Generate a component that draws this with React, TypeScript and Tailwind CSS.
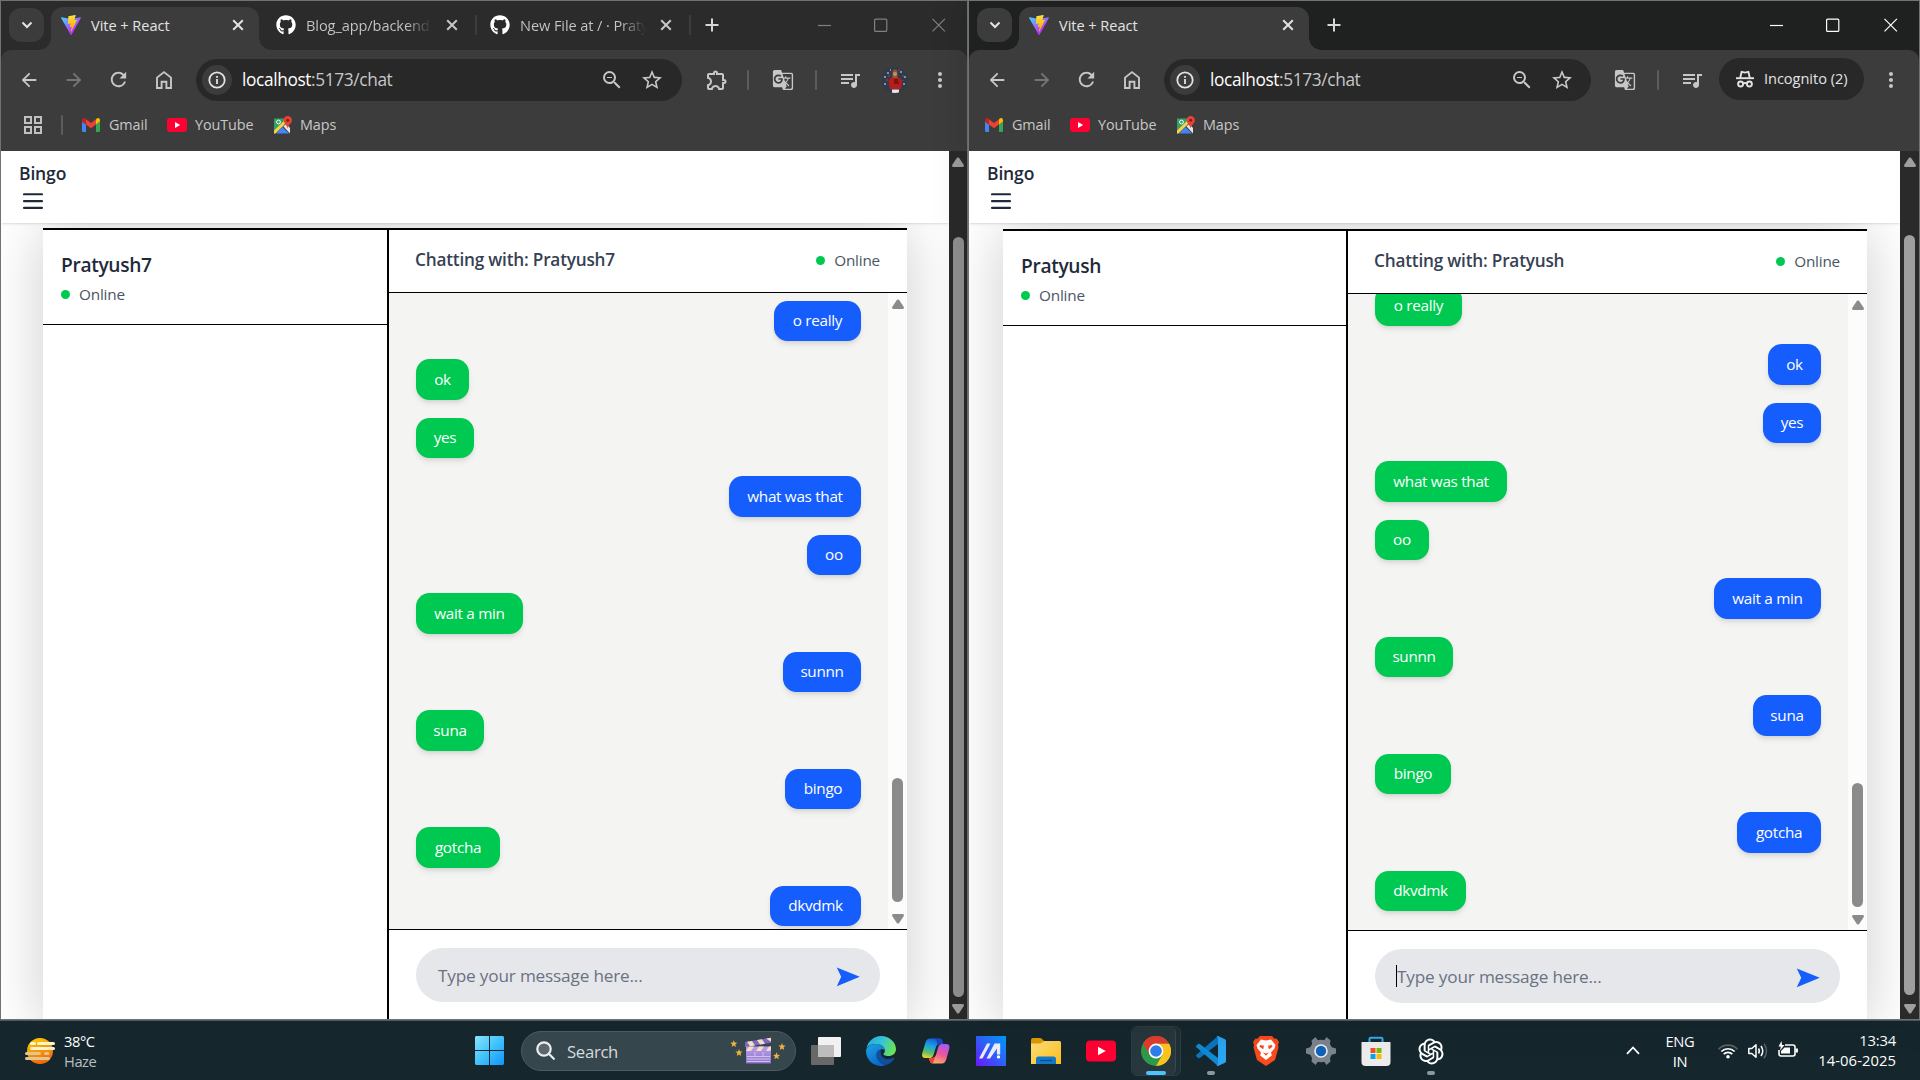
import React from 'react';
import { FaGithub } from 'react-icons/fa';
import {
  MdArrowBack,
  MdArrowForward,
  MdRefresh,
  MdZoomOut,
  MdStarOutline,
  MdOutlineExtension,
  MdGTranslate,
  MdQueueMusic,
  MdMoreVert,
} from 'react-icons/md';
import { AiOutlineOpenAI } from 'react-icons/ai';

type Side = 'in' | 'out';
interface Message {
  text: string;
  fromLeft: Side;
  width: string;
}

const messages: Message[] = [
  { text: 'o really', fromLeft: 'out', width: 'w-[87px]' },
  { text: 'ok', fromLeft: 'in', width: 'w-[53px]' },
  { text: 'yes', fromLeft: 'in', width: 'w-[58px]' },
  { text: 'what was that', fromLeft: 'out', width: 'w-[132px]' },
  { text: 'oo', fromLeft: 'out', width: 'w-[54px]' },
  { text: 'wait a min', fromLeft: 'in', width: 'w-[107px]' },
  { text: 'sunnn', fromLeft: 'out', width: 'w-[78px]' },
  { text: 'suna', fromLeft: 'in', width: 'w-[68px]' },
  { text: 'bingo', fromLeft: 'out', width: 'w-[76px]' },
  { text: 'gotcha', fromLeft: 'in', width: 'w-[84px]' },
  { text: 'dkvdmk', fromLeft: 'out', width: 'w-[91px]' },
];

/* ---------- browser icons ---------- */

function ViteLogo({ id }: { id: string }) {
  return (
    <svg viewBox="0 0 256 257" className="h-5 w-5 shrink-0">
      <defs>
        <linearGradient id={id + 'a'} x1="-.8%" x2="57.6%" y1="7.7%" y2="78.4%">
          <stop offset="0%" stopColor="#41D1FF" />
          <stop offset="100%" stopColor="#BD34FE" />
        </linearGradient>
        <linearGradient id={id + 'b'} x1="43.4%" x2="50.3%" y1="2.2%" y2="89%">
          <stop offset="0%" stopColor="#FFEA83" />
          <stop offset="8.3%" stopColor="#FFDD35" />
          <stop offset="100%" stopColor="#FFA800" />
        </linearGradient>
      </defs>
      <path
        fill={`url(#${id}a)`}
        d="M255.153 37.938L134.897 252.976c-2.483 4.44-8.862 4.466-11.382.048L.875 37.958c-2.746-4.814 1.371-10.646 6.827-9.67l120.385 21.517a6.537 6.537 0 0 0 2.322-.004l117.867-21.483c5.438-.991 9.574 4.796 6.877 9.62Z"
      />
      <path
        fill={`url(#${id}b)`}
        d="M185.432.063L96.44 17.501a3.268 3.268 0 0 0-2.634 3.014l-5.474 92.456a3.268 3.268 0 0 0 3.997 3.378l24.777-5.718c2.318-.535 4.413 1.507 3.936 3.838l-7.361 36.047c-.495 2.426 1.782 4.5 4.151 3.78l15.304-4.649c2.372-.72 4.652 1.36 4.15 3.788l-11.698 56.621c-.732 3.542 3.979 5.473 5.943 2.437l1.313-2.028l72.516-144.72c1.215-2.423-.88-5.186-3.54-4.672l-25.505 4.922c-2.396.462-4.435-1.77-3.759-4.114l16.646-57.705c.677-2.35-1.37-4.583-3.769-4.113Z"
      />
    </svg>
  );
}

const CloseX = () => (
  <svg viewBox="0 0 12 12" className="h-3 w-3 shrink-0" stroke="currentColor" strokeWidth="2" fill="none">
    <path d="M1.2 1.2l9.6 9.6M10.8 1.2l-9.6 9.6" />
  </svg>
);

const Plus = () => (
  <svg viewBox="0 0 14 14" className="h-[14px] w-[14px] shrink-0" stroke="#d6d6d6" strokeWidth="2" fill="none">
    <path d="M7 .5v13M.5 7h13" />
  </svg>
);

const HomeIcon = () => (
  <svg viewBox="0 0 18 20" className="h-5 w-[18px]" fill="none" stroke="#c7c7c7" strokeWidth="1.9">
    <path d="M2 18V7.6L9 2.1l7 5.5V18h-4.6v-6.3H6.6V18z" />
  </svg>
);

const InfoIcon = () => (
  <svg viewBox="0 0 18 18" className="h-[18px] w-[18px]" fill="none" stroke="#e3e3e3" strokeWidth="1.8">
    <circle cx="9" cy="9" r="7.7" />
    <path d="M9 8v5M9 5v1.8" />
  </svg>
);

const AppsIcon = () => (
  <svg viewBox="0 0 18 18" className="h-[18px] w-[18px]" fill="none" stroke="#c0c0c0" strokeWidth="2">
    <path d="M1 1h6v6H1zM11 1h6v6h-6zM1 11h6v6H1zM11 11h6v6h-6z" />
  </svg>
);

const IncognitoIcon = () => (
  <svg viewBox="0 0 18 18" className="h-[18px] w-[18px]" fill="none" stroke="#e3e3e3" strokeWidth="1.9">
    <path d="M0 8.2h18" />
    <path d="M4.2 8 5.6 1.8 9 2.6l3.4-.8L13.800 8" />
    <circle cx="4.600" cy="14" r="2.500" />
    <circle cx="13.400" cy="14" r="2.500" />
    <path d="M7 13.500q2-1.100 4 0" />
  </svg>
);

const GmailIcon = () => (
  <svg viewBox="0 0 18 14" className="h-[14px] w-[18px] shrink-0">
    <path fill="#4285f4" d="M0 3.500v9.200Q0 14 1.300 14H4V6.500z" />
    <path fill="#34a853" d="M18 3.500v9.200q0 1.300-1.300 1.300H14V6.500z" />
    <path fill="#ea4335" d="M4 1.300 9 5l5-3.700v5.200L9 10.200 4 6.500z" />
    <path fill="#c5221f" d="M0 2.200Q0 0 2 0q1 0 2 1.300v5.200L0 3.600z" />
    <path fill="#fbbc04" d="M18 2.200Q18 0 16 0q-1 0-2 1.300v5.200l4-2.900z" />
  </svg>
);

const YouTubeSmall = () => (
  <svg viewBox="0 0 20 14" className="h-[14px] w-5 shrink-0">
    <rect width="20" height="14" rx="3" fill="#ff0033" />
    <path d="M8 4l5.200 3L8 10z" fill="#fff" />
  </svg>
);

const MapsIcon = () => (
  <svg viewBox="0 0 18 18" className="h-[18px] w-[18px] shrink-0">
    <path fill="#34a265" d="M0 2.500h12L9 10 1 17.500H0z" />
    <path fill="#fbd04b" d="M0 14.500 10 5l2 2L1.500 17.500H0z" />
    <path fill="#4285f4" d="M2 17.500 8.500 11l6.500 6.500z" />
    <path fill="#e6e6e6" d="M9.300 10.300 12.500 8 16 12v5.500z" />
    <circle cx="4.500" cy="6" r="1.900" fill="none" stroke="#fff" strokeWidth="1" />
    <path fill="#e54335" d="M13.700 0a4.200 4.200 0 0 0-4.200 4.200c0 3 3.500 4.300 4.200 8.300.7-4 4.200-5.300 4.200-8.300A4.200 4.200 0 0 0 13.700 0z" />
    <circle cx="13.700" cy="4.200" r="1.500" fill="#8a1c14" />
  </svg>
);

const Avatar = () => (
  <svg viewBox="0 0 26 26" className="ml-[20px] h-[26px] w-[26px] shrink-0 rounded-full">
    <rect width="26" height="26" fill="#2f3a4b" />
    <path d="M2 9h2v2H2zM5 5h2v2H5zM18 4h2v2h-2zM22 9h2v2h-2zM2 16h2v2H2zM21 16h2v2h-2zM8 2h1v2H8z" fill="#7f93a8" />
    <path d="M4 12h2v2H4zM20 8h2v2h-2zM6 8h2v2H6zM16 2h2v2h-2zM20 13h2v1h-2z" fill="#7e3440" />
    <path d="M6.500 14q1.500-4 6.500-4t7 4l-1 8H8z" fill="#b81d1c" />
    <path d="M12 12h4l1 5h-5z" fill="#7e1313" />
    <path d="M10 22.500h7V26h-7z" fill="#e9e4e4" />
    <path d="M10.500 6q0-3.500 2.500-3.500t2.500 3.500v5h-5z" fill="#8a5a35" />
    <circle cx="13" cy="7" r="2" fill="#c48d62" />
  </svg>
);

/* ---------- browser chrome ---------- */

function WindowControls({ color, className }: { color: string; className: string }) {
  return (
    <svg viewBox="0 0 128 14" className={className} fill="none" stroke={color} strokeWidth="1.200">
      <path d="M0 7.500h13" />
      <rect x="56.600" y="1.200" width="12.200" height="12.200" rx="1" />
      <path d="M114.500.9l12.400 12.400M126.900.9l-12.400 12.400" />
    </svg>
  );
}

function TabSearch() {
  return (
    <div className="ml-[8px] mt-[7px] flex h-[34px] w-[35px] shrink-0 items-center justify-center rounded-[12px] bg-[#3c3c3c]">
      <svg viewBox="0 0 12 8" className="h-2 w-3" fill="none" stroke="#e3e3e3" strokeWidth="2">
        <path d="M1.500 1.500 6 6l4.500-4.500" />
      </svg>
    </div>
  );
}

function ActiveTab({ id, width }: { id: string; width: string }) {
  return (
    <>
      <div className="-ml-[5px] h-3 w-3 shrink-0 self-end bg-[radial-gradient(circle_at_0_0,transparent_11.5px,#3c3c3c_12px)]" />
      <div className={'mt-[6px] flex h-[43px] shrink-0 items-center rounded-t-[12px] bg-[#3c3c3c] pb-[7px] pl-[10px] pr-[15px] ' + width}>
        <ViteLogo id={id} />
        <span className="mt-[2px] ml-[10px] flex-1 text-[14.600px] tracking-[-0.050px] text-[#e3e3e3]">Vite + React</span>
        <span className="text-[#e3e3e3]">
          <CloseX />
        </span>
      </div>
      <div className="h-3 w-3 shrink-0 self-end bg-[radial-gradient(circle_at_100%_0,transparent_11.5px,#3c3c3c_12px)]" />
    </>
  );
}

function IdleTab({ title, className }: { title: string; className: string }) {
  return (
    <div className={'flex h-5 shrink-0 items-center ' + className}>
      <FaGithub className="h-5 w-5 shrink-0 text-white" />
      <span className="mt-[2px] ml-[10px] w-[126px] whitespace-nowrap bg-linear-to-r from-[#c7c7c7] from-80% to-[#2b2b2b] to-100% bg-clip-text text-[14.600px] tracking-[-0.100px] text-transparent">
        {title}
      </span>
      <span className="ml-[14px] text-[#c7c7c7]">
        <CloseX />
      </span>
      <span className="ml-[17px] h-5 w-[2px] bg-[#3c3c3c]" />
    </div>
  );
}

const Divider = ({ className }: { className: string }) => (
  <span className={'w-[2px] shrink-0 rounded bg-[#5c5c5c] ' + className} />
);

function NavButtons() {
  return (
    <div className="flex w-[180px] shrink-0 items-center text-[#c7c7c7]">
      <span className="flex w-[45px] justify-center">
        <MdArrowBack className="h-[22px] w-[22px]" />
      </span>
      <span className="flex w-[45px] justify-center text-[#757575]">
        <MdArrowForward className="h-[22px] w-[22px]" />
      </span>
      <span className="flex w-[45px] justify-center">
        <MdRefresh className="h-[23px] w-[23px]" />
      </span>
      <span className="flex w-[45px] justify-center">
        <HomeIcon />
      </span>
    </div>
  );
}

function AddressBar({ className }: { className: string }) {
  return (
    <div className={'ml-[10px] flex h-[42px] shrink-0 items-center rounded-full bg-[#282828] pl-[6px] ' + className}>
      <span className="flex h-[30px] w-[30px] items-center justify-center rounded-full bg-[#3c3c3c]">
        <InfoIcon />
      </span>
      <span className="ml-[10px] flex-1 text-[17.300px] tracking-[-0.370px] text-[#c7c7c7]">
        <span className="text-white">localhost</span>:5173/chat
      </span>
      <MdZoomOut className="h-6 w-6 text-[#c7c7c7]" />
      <MdStarOutline className="ml-[16px] h-6 w-6 text-[#c7c7c7]" />
    </div>
  );
}

function Bookmarks({ withApps }: { withApps: boolean }) {
  return (
    <div className={'flex h-[48px] items-center text-[14.400px] tracking-[-0.100px] text-[#c7c7c7] ' + (withApps ? 'pl-[23px]' : 'pl-[16px]')}>
      {withApps && (
        <div className="mr-[19px] flex items-center">
          <AppsIcon />
          <Divider className="ml-[19px] h-5" />
        </div>
      )}
      <GmailIcon />
      <span className="ml-[9px] w-[58px]">Gmail</span>
      <YouTubeSmall />
      <span className="ml-[8px] w-[79px]">YouTube</span>
      <MapsIcon />
      <span className="ml-[8px]">Maps</span>
    </div>
  );
}

/* ---------- page ---------- */

function Scrollbar({ className, thumb, arrow }: { className: string; thumb: string; arrow: string }) {
  return (
    <div className={'flex shrink-0 flex-col items-center ' + className}>
      <svg viewBox="0 0 12 10" className="h-[10px] w-3 shrink-0" fill={arrow}>
        <path d="M5 .8Q6 0 7 .8l4.800 7.200q.5 2-1.300 2h-9q-1.800 0-1.300-2z" />
      </svg>
      <div className={'w-[11px] shrink-0 rounded-full ' + thumb} />
      <svg viewBox="0 0 12 10" className="mt-auto h-[10px] w-3 shrink-0" fill={arrow}>
        <path d="M5 9.200q1 .8 2 0L11.800 2q.5-2-1.300-2h-9Q-.3 0 .2 2z" />
      </svg>
    </div>
  );
}

function Online({ className }: { className: string }) {
  return (
    <div className={'flex items-center text-[15.300px] tracking-[-0.200px] text-[#4a5565] ' + className}>
      <span className="mr-[9px] h-[9px] w-[9px] rounded-full bg-[#00c951]" />
      Online
    </div>
  );
}

interface ChatProps {
  peer: string;
  mirrored: boolean;
  focused: boolean;
  cardClass: string;
  sideClass: string;
  listClass: string;
  thumb: string;
}

function ChatCard({ peer, mirrored, focused, cardClass, sideClass, listClass, thumb }: ChatProps) {
  return (
    <div className={'flex w-[864px] shrink-0 border-t-2 border-black bg-white shadow-[0_0_56px_rgba(0,0,0,0.2)] ' + cardClass}>
      <div className={'shrink-0 border-r-2 border-black ' + sideClass}>
        <div className="h-[95px] border-b border-black pl-[18px] pt-[19px]">
          <div className="text-[19.200px] leading-[31px] font-semibold tracking-[-0.350px] text-[#1e2939]">{peer}</div>
          <Online className="mt-[3px] h-[23px]" />
        </div>
      </div>
      <div className="flex min-w-0 flex-1 flex-col">
        <div className="flex h-[63px] shrink-0 items-center justify-between border-b border-black pr-[27px] pb-[2px] pl-[26px]">
          <span className="text-[17.200px] font-semibold tracking-[-0.200px] text-[#364153]">Chatting with: {peer}</span>
          <Online className="" />
        </div>
        <div className="flex h-[636px] shrink-0 overflow-hidden bg-[#f4f4f2]">
          <div className={'flex min-w-0 flex-1 flex-col justify-end gap-[18px] px-[27px] ' + listClass}>
            {messages.map((m) => {
              const own = (m.fromLeft === 'out') !== mirrored;
              return (
                <div
                  key={m.text}
                  className={
                    'flex h-[40.500px] shrink-0 items-center justify-center rounded-[13.500px] text-[15.300px] font-medium tracking-[-0.320px] whitespace-nowrap text-white shadow-md ' +
                    m.width +
                    (own ? ' self-end bg-[#155dfc]' : ' self-start bg-[#00c951]')
                  }
                >
                  {m.text}
                </div>
              );
            })}
          </div>
          <Scrollbar className="w-[19px] bg-[#fcfcfc] pt-[6px] pb-[5px]" thumb={thumb} arrow="#8b8b8b" />
        </div>
        <div className="flex flex-1 items-start border-t border-black px-[27px] pt-[18px]">
          <div className="flex h-[54px] w-full items-center rounded-full bg-[#e5e7eb] pl-[21px] pr-[20px]">
            <span className={'h-[22px] w-px ' + (focused ? 'bg-black' : 'bg-transparent')} />
            <span className="mt-[2px] flex-1 text-[17.200px] tracking-[-0.180px] text-[#6a7282]">Type your message here...</span>
            <svg viewBox="0 0 24 20" className="mt-[3px] h-5 w-6" fill="#155dfc">
              <path d="M.8.400 23.800 9.700.8 19.200 5.200 9.700z" />
            </svg>
          </div>
        </div>
      </div>
    </div>
  );
}

function Page({ children, navWidth }: { children: React.ReactNode; navWidth: string }) {
  return (
    <div className={'flex h-full shrink-0 flex-col overflow-hidden bg-white ' + navWidth}>
      <header className="z-10 flex h-[72px] shrink-0 flex-col bg-white pt-[9px] pl-[18px] shadow-sm">
        <span className="text-[17.500px] leading-[27px] font-semibold tracking-[-0.150px] text-[#1e2939]">Bingo</span>
        <svg viewBox="0 0 20 17" className="mt-[6px] ml-[4px] h-[17px] w-5" stroke="#1e2939" strokeWidth="2.100" strokeLinecap="round">
          <path d="M1 1.300h18M1 8.100h18M1 14.900h18" />
        </svg>
      </header>
      {children}
    </div>
  );
}

/* ---------- taskbar ---------- */

const WeatherIcon = () => (
  <svg viewBox="0 0 30 26" className="ml-[25px] h-[26px] w-[30px] shrink-0">
    <defs>
      <linearGradient id="sun" x1="0" x2=".4" y1="0" y2="1">
        <stop offset="0" stopColor="#ffd400" />
        <stop offset="1" stopColor="#f26a0a" />
      </linearGradient>
    </defs>
    <circle cx="15" cy="13" r="13" fill="url(#sun)" />
    <g strokeWidth="3" strokeLinecap="round">
      <path d="M6.500 5.500h3M13.500 5.500h15M6.500 10.500h22" stroke="#fff3cc" />
      <path d="M1.500 15.500h13M20.500 15.500h2.500M1.500 20.500h22" stroke="#e3c68d" />
    </g>
  </svg>
);

const StartIcon = () => (
  <svg viewBox="0 0 29 29" className="ml-[378px] h-[29px] w-[29px] shrink-0">
    <defs>
      <linearGradient id="win" x1="0" x2="1" y1="0" y2="1">
        <stop offset="0" stopColor="#8be2fd" />
        <stop offset=".5" stopColor="#40c3fb" />
        <stop offset="1" stopColor="#0f95fb" />
      </linearGradient>
    </defs>
    <path fill="url(#win)" d="M1 0h13v14H0V1zM15 0h13l1 1v13H15zM0 15h14v14H1l-1-1zM15 15h14v13l-1 1H15z" />
  </svg>
);

const Clapper = () => (
  <svg viewBox="0 0 56 28" className="h-7 w-14 shrink-0">
    <defs>
      <linearGradient id="clap" x1="0" x2="0" y1="0" y2="1">
        <stop offset="0" stopColor="#b9a0e6" />
        <stop offset="1" stopColor="#8f72cf" />
      </linearGradient>
      <path id="star" d="M0-3.600 1-1.100 3.600-.9 1.600.8 2.200 3.400 0 2-2.200 3.400-1.600.8-3.600-.9-1-1.100z" />
    </defs>
    <g fill="#ecb43c">
      <use href="#star" x="4" y="7" transform="scale(.95)" />
      <use href="#star" x="9" y="15.500" />
      <use href="#star" x="52" y="9.500" />
      <use href="#star" x="47" y="19" transform="scale(.99)" />
    </g>
    <path d="M15 5 41 .8v5L15 10z" fill="#8167bd" />
    <path d="M17 4.700 22 3.900l3 4.500-5 .8zM27 3.100l5-.8 3 4.500-5 .8zM36 1.600l5-.8v4z" fill="#f4dccb" />
    <path d="M16 9.500h25V26q0 .500-.5.500h-24q-.5 0-.5-.500z" fill="url(#clap)" />
    <path d="M19 9.500h5l-3 4.500h-5zM29 9.500h5l-3 4.500h-5zM39 9.500h2V13l-1 1h-4z" fill="#f4dccb" />
    <path d="M17 19.500h23M17 22h23M17 24.500h23M25 15v4M33 15v4" stroke="#d9c8f5" strokeWidth=".9" />
  </svg>
);

const TaskView = () => (
  <svg viewBox="0 0 30 30" className="h-[30px] w-[30px]">
    <rect x="0" y="9" width="23" height="20" rx="1" fill="#686868" />
    <rect x="7" y="1" width="23" height="20" rx="1" fill="#f1f1f1" />
    <path d="M7 9h16v12H7z" fill="#bdbdbd" />
  </svg>
);

const EdgeIcon = () => (
  <svg viewBox="0 0 30 30" className="h-[30px] w-[30px]">
    <defs>
      <linearGradient id="edgeTop" x1="0" x2="1" y1=".3" y2=".6">
        <stop offset="0" stopColor="#27a7e6" />
        <stop offset=".5" stopColor="#35c7d0" />
        <stop offset="1" stopColor="#6fe34f" />
      </linearGradient>
      <linearGradient id="edgeBody" x1="0" x2=".6" y1="0" y2="1">
        <stop offset="0" stopColor="#1da4e4" />
        <stop offset="1" stopColor="#0a66c9" />
      </linearGradient>
    </defs>
    <path d="M.5 12C2 5 8 0 15 0c8 0 15 6 15 13 0 4.500-3.500 7-7.500 7-3.500 0-5.500-1.300-5-2.300 1-1 1.500-2 1.300-3.500C18.300 10 14 8 10 8 5 8 1.500 10.500.5 12z" fill="url(#edgeTop)" />
    <path d="M10 8c4.500 0 8 2.500 8.700 5.700-2.500-1.400-7.200-.2-7.700 4.800-.3 5 4 10 9 10.500-2 .8-3.500 1-5 1C7 30 0 23.500 0 15c0-4 5-7 10-7z" fill="url(#edgeBody)" />
    <path d="M13.500 13.800c-3.700 1.800-4.500 6.700-1.500 10.700 3 4 7 4.800 9.500 3.900 3.500-1.400 5.500-3.700 6.500-5.500.5-.8-.2-1.200-1-.8-6 2.600-11.500-.2-12-4.100-.3-2 .3-3.400-1.500-4.200z" fill="#114e9b" />
  </svg>
);

const CopilotIcon = () => (
  <svg viewBox="0 0 30 30" className="h-[30px] w-[30px]">
    <defs>
      <linearGradient id="coA" x1=".6" x2=".3" y1="0" y2="1">
        <stop offset="0" stopColor="#1656d8" />
        <stop offset=".4" stopColor="#19a3df" />
        <stop offset=".75" stopColor="#5bbf6a" />
        <stop offset="1" stopColor="#f0d02a" />
      </linearGradient>
      <linearGradient id="coB" x1=".7" x2=".3" y1="0" y2="1">
        <stop offset="0" stopColor="#a45af0" />
        <stop offset=".5" stopColor="#f0559a" />
        <stop offset="1" stopColor="#ffb05c" />
      </linearGradient>
    </defs>
    <path d="M9 2.500h9.500q2.200 0 3 2.500l.8 3h-4q-2.500 0-3.300 2.700l-2.500 8.300q-.8 3-3.500 3H4.500Q0 22 1.300 17L4.500 6.500Q5.700 2.500 9 2.500z" fill="url(#coA)" />
    <path d="M21 27.500h-9q-2.500 0-3.200-2.500L8 22h3.500q2.500 0 3.300-2.700L17.300 11q.8-3 3.500-3H25q4.500 0 3.200 5l-3 10.500q-1.200 4-4.200 4z" fill="url(#coB)" />
    <path d="M15 3h3.500q2.200 0 3 2.500l.8 2.500h-4l-1.800.5z" fill="#1746c4" />
    <path d="M8 22h3.500q1.500 0 2.500-1l-2 6.500q-2.500 0-3.200-2.500z" fill="#e8433c" />
  </svg>
);

const AsusIcon = () => (
  <svg viewBox="0 0 30 30" className="h-[30px] w-[30px]">
    <defs>
      <linearGradient id="asus" x1="0" x2="1" y1="1" y2="0">
        <stop offset="0" stopColor="#6b16ff" />
        <stop offset=".5" stopColor="#2f5ffa" />
        <stop offset="1" stopColor="#009dfc" />
      </linearGradient>
    </defs>
    <path fill="url(#asus)" d="M0 0h30v30H0z" />
    <path d="M3 22.500 11 7.500h3.500L6.500 22.500zM10.500 22.500l8-15h5.700v11h-3.300V12.500L14 22.500z" fill="#e9edff" />
    <circle cx="22.500" cy="20.900" r="1.700" fill="#fff" />
  </svg>
);

const FolderIcon = () => (
  <svg viewBox="0 0 30 30" className="h-[30px] w-[30px]">
    <defs>
      <linearGradient id="folder" x1="0" x2="1" y1="0" y2="1">
        <stop offset="0" stopColor="#ffe07a" />
        <stop offset="1" stopColor="#fbbd1c" />
      </linearGradient>
    </defs>
    <path d="M0 4q0-2 2-2h7q1 0 2 1l2 2h15v6H0z" fill="#dc9a05" />
    <path d="M0 7.500h9.500L13 5h15.500Q30 5 30 6.500V28H0z" fill="url(#folder)" />
    <path d="M5 28v-5q0-2.500 2.500-2.500h15Q25 20.500 25 23v5z" fill="#1279c8" />
    <path d="M9 24.500h12" stroke="#0b4f8a" strokeWidth="1.200" />
  </svg>
);

const YouTubeIcon = () => (
  <svg viewBox="0 0 30 30" className="h-[30px] w-[30px]">
    <rect y="4.500" width="30" height="21" rx="4" fill="#ff0033" />
    <path d="M12 10.800l7.800 4.200-7.800 4.200z" fill="#fff" />
  </svg>
);

const ChromeIcon = () => (
  <svg viewBox="0 0 30 30" className="h-[30px] w-[30px] shrink-0">
    <circle cx="15" cy="15" r="15" fill="#2b9a4a" />
    <path d="M15 7.500h13A15 15 0 0 1 15 30l6.500-11.250z" fill="#fcc31e" />
    <path d="M2 7.500A15 15 0 0 1 28 7.500H15L8.500 18.700z" fill="#e33b2e" />
    <circle cx="15" cy="15" r="7.400" fill="#fff" />
    <circle cx="15" cy="15" r="5.800" fill="#2f7de9" />
  </svg>
);

const VsCodeIcon = () => (
  <svg viewBox="0 0 30 30" className="h-[30px] w-[30px]">
    <path d="M22 8 4.500 21.600 2.800 22.600 .4 20.600q-.8-.9 0-1.800L22 0z" fill="#0b74bd" />
    <path d="M22 22 4.500 8.400 2.800 7.400.4 9.400q-.8.9 0 1.800L22 30z" fill="#1189d2" />
    <path d="M22 0l7 3.200q1 .5 1 1.600v20.400q0 1.100-1 1.600L22 30q-1 0-1.500-1 1.500.4 1.500-1.500v-25Q22 .6 20.500 1 21 0 22 0z" fill="#2ba4f2" />
  </svg>
);

const BraveIcon = () => (
  <svg viewBox="0 0 30 30" className="h-[30px] w-[30px]">
    <path d="M9 0h12l2.500 2.800 2-.3L28 6l-1 3 .5 2.500L24 24l-9 6-9-6L2.500 11.500 3 9 2 6l2.500-3.500 2 .3z" fill="#fb4a1b" />
    <path d="M15 4.500l5-1L24.500 9l-1 3.500-3.500 4 .8 3-2.300 1.700L15 24l-3.500-2.800-2.300-1.700.8-3-3.500-4L5.500 9 10 3.500z" fill="#fff" />
    <path d="M9 9l4 .8-.8 3.500L8.500 10.800zM21 9l-4 .8.8 3.500 3.700-2.500zM12 16.500l3 1 3-1-3 3.300z" fill="#fb4a1b" />
  </svg>
);

const GearIcon = () => (
  <svg viewBox="0 0 30 30" className="h-[30px] w-[30px]">
    <g fill="#7b838c">
      <circle cx="15" cy="15" r="11.200" />
      <path d="M0 12.500 5 11v8l-5-1.500zM30 12.500 25 11v8l5-1.500z" />
      <path d="M5.500 4.500 9.500 1l3.500 5-6.500 5zM24.500 4.500 20.500 1 17 6l6.500 5zM5.500 25.500l4 3.500 3.500-5-6.500-5zM24.500 25.500l-4 3.500-3.500-5 6.500-5z" />
    </g>
    <circle cx="15" cy="15" r="6.800" fill="#e9edf0" />
    <circle cx="15" cy="15" r="5.200" fill="#0f62b8" />
  </svg>
);

const StoreIcon = () => (
  <svg viewBox="0 0 30 30" className="h-[30px] w-[30px]">
    <path d="M8.500 8V3q0-1.200 1.200-1.200h10.600q1.200 0 1.200 1.200v5" fill="none" stroke="#2fb2ea" strokeWidth="2" />
    <path d="M.5 6h29v20q0 4-4 4h-21q-4 0-4-4z" fill="#ececec" />
    <path d="M9.500 12H14.500v5H9.500z" fill="#f25022" />
    <path d="M15.500 12H20.500v5H15.500z" fill="#7fba00" />
    <path d="M9.500 18H14.500v5H9.500z" fill="#00a4ef" />
    <path d="M15.500 18H20.500v5H15.500z" fill="#ffb900" />
  </svg>
);

function Taskbar() {
  return (
    <footer className="flex h-[60px] w-full items-center border-t border-[#4f5a5c] bg-[#15272d] text-white">
      <WeatherIcon />
      <div className="ml-[9px] w-[33px] text-[14.700px] leading-5 tracking-[-0.450px] whitespace-nowrap">
        <div>38°C</div>
        <div className="text-[#b8bec0]">Haze</div>
      </div>
      <StartIcon />
      <div className="ml-[17px] flex h-10 w-[275px] shrink-0 items-center rounded-full border border-[#4c5b61] bg-[#36464d] pl-[14px] pr-[9px]">
        <svg viewBox="0 0 19 19" className="h-[19px] w-[19px]" fill="#5b686e" stroke="#eceeef" strokeWidth="2.200">
          <circle cx="8" cy="8" r="6.700" />
          <path d="M12.800 12.800 17.800 17.800" strokeLinecap="round" />
        </svg>
        <span className="mt-[2px] ml-[12px] flex-1 text-[16.700px] tracking-[-0.300px] text-[#d7dbdc]">Search</span>
        <Clapper />
      </div>
      <div className="ml-[15px] flex items-center gap-[25px]">
        <TaskView />
        <EdgeIcon />
        <CopilotIcon />
        <AsusIcon />
        <FolderIcon />
        <YouTubeIcon />
        <div className="-mx-[10px] flex h-[50px] w-[50px] rounded-[6px] border border-[#2d3c41] bg-[#1f3036]">
          <div className="flex w-[44px] flex-col rounded-[6px] border-r border-[#3a484c] bg-[#27373c] pt-[9px] pl-[9px]">
            <ChromeIcon />
            <span className="mt-[5px] ml-[5px] h-1 w-5 shrink-0 rounded-full bg-[#4cc2ff]" />
          </div>
        </div>
        <div className="flex flex-col items-center pt-[9px]">
          <VsCodeIcon />
          <span className="mt-[5px] h-1 w-2 rounded-full bg-[#8e989b]" />
        </div>
        <BraveIcon />
        <GearIcon />
        <StoreIcon />
        <div className="flex flex-col items-center pt-[9px]">
          <AiOutlineOpenAI className="h-[30px] w-[30px] scale-110" />
          <span className="mt-[5px] h-1 w-2 rounded-full bg-[#8e989b]" />
        </div>
      </div>
      <svg viewBox="0 0 14 9" className="ml-[180px] h-[9px] w-[14px] shrink-0" fill="none" stroke="#fff" strokeWidth="1.800">
        <path d="M1 7.800 7 1.500l6 6.300" />
      </svg>
      <div className="ml-[23px] w-[34px] text-center text-[14.700px] leading-5 tracking-[-0.350px]">
        <div>ENG</div>
        <div>IN</div>
      </div>
      <svg viewBox="0 0 20 16" className="ml-[21px] h-4 w-5 shrink-0" fill="none" stroke="#fff" strokeWidth="1.700">
        <path d="M.6 6.200a13 13 0 0 1 18.800 0" stroke="#55646a" />
        <path d="M3.300 8.500a9.500 9.500 0 0 1 13.400 0M5.700 11.200a6 6 0 0 1 8.600 0" />
        <circle cx="10" cy="13.800" r="1.800" fill="#fff" stroke="none" />
      </svg>
      <svg viewBox="0 0 20 16" className="ml-[10px] h-4 w-5 shrink-0" fill="none" stroke="#fff" strokeWidth="1.500">
        <path d="M.8 5.500h3L8 1.800v12.400l-4.200-3.700h-3z" strokeLinejoin="round" />
        <path d="M10.500 5.500q1.700 2.500 0 5M13 3q3.500 5 0 10" />
        <path d="M16 .8q5 7.200 0 14.400" stroke="#55646a" />
      </svg>
      <svg viewBox="0 0 20 17" className="ml-[10px] -mt-[2px] h-[17px] w-5 shrink-0" fill="none" stroke="#fff" strokeWidth="1.600">
        <path d="M7 4h8q2 0 2 2v7q0 2-2 2H3q-2 0-2-2V9" />
        <path d="M18.800 7.500v4" strokeWidth="2.200" />
        <path d="M6.500 6.500h5.500v6H3V10z" fill="#fff" stroke="none" />
        <path d="M3.500 0 .5 5.500h2.300L2 9.500 6.500 4H4z" fill="#fff" stroke="none" />
      </svg>
      <div className="-mt-[2px] mr-[24px] ml-auto text-right text-[14.800px] leading-5 tracking-[0.050px]">
        <div className="tracking-[-0.200px]">13:34</div>
        <div>14-06-2025</div>
      </div>
    </footer>
  );
}

/* ---------- windows ---------- */

function LeftWindow() {
  return (
    <section className="flex h-full w-[968px] shrink-0 flex-col border border-[#707372]">
      <div className="flex h-[49px] shrink-0 bg-[#2b2b2b]">
        <TabSearch />
        <ActiveTab id="v1" width="w-[208px]" />
        <IdleTab title="Blog_app/backend" className="mt-[14px] ml-[5px]" />
        <IdleTab title="New File at / · Praty" className="mt-[14px] ml-[13px]" />
        <div className="mt-[17px] ml-[14px]">
          <Plus />
        </div>
        <WindowControls color="#808080" className="mt-[17px] ml-[99px] h-[14px] w-[128px] shrink-0" />
      </div>
      <div className="shrink-0 bg-[#2b2b2b]">
        <div className="h-[101px] rounded-t-[10px] bg-[#3c3c3c]">
          <div className="flex h-[51px] items-center pt-[8px] pl-[5px]">
            <NavButtons />
            <AddressBar className="w-[486px] pr-[18px]" />
            <MdOutlineExtension className="ml-[23px] h-6 w-6 shrink-0 text-[#c7c7c7]" />
            <Divider className="ml-[18px] h-5" />
            <MdGTranslate className="ml-[23px] h-[22px] w-[22px] shrink-0 text-[#c7c7c7]" />
            <Divider className="ml-[21px] h-5" />
            <MdQueueMusic className="ml-[21px] h-6 w-6 shrink-0 text-[#c7c7c7]" />
            <Avatar />
            <MdMoreVert className="ml-[20px] h-6 w-6 shrink-0 text-[#c7c7c7]" />
          </div>
          <Bookmarks withApps />
        </div>
      </div>
      <div className="flex min-h-0 flex-1">
        <Page navWidth="w-[948px]">
          <ChatCard
            peer="Pratyush7"
            mirrored={false}
            focused={false}
            cardClass="mt-[5px] ml-[42px] h-[800px]"
            sideClass="w-[346px]"
            listClass="pb-[3px]"
            thumb="mt-[469px] h-[124px] bg-[#8b8b8b]"
          />
        </Page>
        <Scrollbar className="w-[18px] bg-[#2a2a2a] pt-[6px] pb-[5px]" thumb="mt-[70px] h-[760px] bg-[#929292]" arrow="#9f9f9f" />
      </div>
    </section>
  );
}

function RightWindow() {
  return (
    <section className="z-10 flex h-full w-[952px] shrink-0 flex-col border border-[#707372] shadow-[0_0_36px_rgba(0,0,0,0.15)]">
      <div className="flex h-[49px] shrink-0 bg-[#1f2120]">
        <TabSearch />
        <ActiveTab id="v2" width="w-[290px]" />
        <div className="mt-[17px] ml-[6px]">
          <Plus />
        </div>
        <WindowControls color="#ffffff" className="mt-[17px] ml-[429px] h-[14px] w-[128px] shrink-0" />
      </div>
      <div className="shrink-0 bg-[#1f2120]">
        <div className="h-[101px] rounded-t-[10px] bg-[#3c3c3c]">
          <div className="flex h-[51px] items-center pt-[8px] pl-[5px]">
            <NavButtons />
            <AddressBar className="w-[427px] pr-[17px]" />
            <MdGTranslate className="ml-[23px] h-[22px] w-[22px] shrink-0 text-[#c7c7c7]" />
            <Divider className="ml-[21px] h-5" />
            <MdQueueMusic className="ml-[21px] h-6 w-6 shrink-0 text-[#c7c7c7]" />
            <div className="-mt-[2px] ml-[15px] flex h-[42px] w-[145px] shrink-0 items-center rounded-full bg-[#282828] pl-[17px] text-[14.600px] tracking-[-0.050px] whitespace-nowrap text-[#e3e3e3]">
              <IncognitoIcon />
              <span className="ml-[10px]">Incognito (2)</span>
            </div>
            <MdMoreVert className="ml-[15px] h-6 w-6 shrink-0 text-[#c7c7c7]" />
          </div>
          <Bookmarks withApps={false} />
        </div>
      </div>
      <div className="flex min-h-0 flex-1">
        <Page navWidth="w-[931px]">
          <ChatCard
            peer="Pratyush"
            mirrored
            focused
            cardClass="mt-[6px] ml-[34px] h-[800px]"
            sideClass="w-[345px]"
            listClass="pb-[19px]"
            thumb="mt-[473px] h-[124px] bg-[#8b8b8b]"
          />
        </Page>
        <Scrollbar className="w-[19px] bg-[#2a2a2a] pt-[6px] pb-[5px]" thumb="mt-[68px] h-[760px] bg-[#9f9f9f]" arrow="#9f9f9f" />
      </div>
    </section>
  );
}

export default function App() {
  return (
    <div className="flex h-[1080px] w-[1920px] flex-col overflow-hidden bg-[#15272d] font-['Open_Sans','Noto_Sans',sans-serif]">
      <main className="flex h-[1020px] shrink-0">
        <LeftWindow />
        <RightWindow />
      </main>
      <Taskbar />
    </div>
  );
}
